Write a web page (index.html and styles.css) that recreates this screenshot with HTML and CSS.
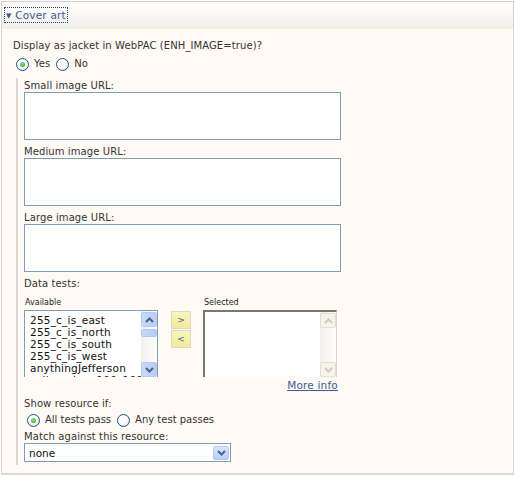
FILE: index.html
```html
<!DOCTYPE html>
<html lang="en">
<head>
  <meta charset="UTF-8">
  <title>Cover art</title>
  <link rel="stylesheet" href="styles.css">
</head>
<body>
  <div class="panel">
    <div class="panel-head">
      <a href="#" class="toggle"><span class="arrow">&#9660;</span> Cover art</a>
    </div>
    <div class="panel-body">
      <div class="label">Display as jacket in WebPAC (ENH_IMAGE=true)?</div>
      <div class="radios">
        <span class="radio checked"></span><span class="radio-text">Yes</span>
        <span class="radio"></span><span class="radio-text">No</span>
      </div>

      <div class="sub">
        <div class="label">Small image URL:</div>
        <div class="textbox"></div>
        <div class="label">Medium image URL:</div>
        <div class="textbox"></div>
        <div class="label">Large image URL:</div>
        <div class="textbox"></div>

        <div class="label">Data tests:</div>
        <div class="tests">
          <div class="col">
            <div class="mini">Available</div>
            <div class="listbox">
              <ul class="items">
                <li>255_c_is_east</li>
                <li>255_c_is_north</li>
                <li>255_c_is_south</li>
                <li>255_c_is_west</li>
                <li>anythingJefferson</li>
                <li>callnumber_100_199</li>
              </ul>
              <div class="scroll">
                <span class="sbtn"><svg width="9" height="6" viewBox="0 0 9 6"><path d="M1 5 L4.5 1.5 L8 5" fill="none" stroke="currentColor" stroke-width="2"/></svg></span>
                <span class="thumb"></span>
                <span class="track"></span>
                <span class="sbtn"><svg width="9" height="6" viewBox="0 0 9 6"><path d="M1 1 L4.5 4.5 L8 1" fill="none" stroke="currentColor" stroke-width="2"/></svg></span>
              </div>
            </div>
          </div>
          <div class="movers">
            <button class="mover">&gt;</button>
            <button class="mover">&lt;</button>
          </div>
          <div class="col">
            <div class="mini">Selected</div>
            <div class="listbox sel">
              <ul class="items"></ul>
              <div class="scroll off">
                <span class="sbtn"><svg width="9" height="6" viewBox="0 0 9 6"><path d="M1 5 L4.5 1.5 L8 5" fill="none" stroke="currentColor" stroke-width="2"/></svg></span>
                <span class="track"></span>
                <span class="sbtn"><svg width="9" height="6" viewBox="0 0 9 6"><path d="M1 1 L4.5 4.5 L8 1" fill="none" stroke="currentColor" stroke-width="2"/></svg></span>
              </div>
            </div>
          </div>
        </div>
        <div class="more"><a href="#">More info</a></div>

        <div class="label">Show resource if:</div>
        <div class="radios two">
          <span class="radio checked"></span><span class="radio-text">All tests pass</span>
          <span class="radio"></span><span class="radio-text">Any test passes</span>
        </div>
        <div class="label">Match against this resource:</div>
        <div class="dropdown">
          <span class="value">none</span>
          <span class="drop-btn"><svg width="9" height="6" viewBox="0 0 9 6"><path d="M1 1 L4.5 4.5 L8 1" fill="none" stroke="currentColor" stroke-width="2"/></svg></span>
        </div>
      </div>
    </div>
  </div>
</body>
</html>
```

FILE: styles.css
```css
body {
  margin: 0;
  padding: 0;
  background: #ffffff;
  font-family: "DejaVu Sans", Verdana, sans-serif;
  font-size: 10px;
  color: #333;
}

.panel {
  margin: 1px 1px 0 1px;
  height: 474px;
  border: 1px solid #d6d3cd;
  border-bottom: 2px solid #dcd9d4;
  background: #fffaf4;
  box-sizing: border-box;
}

.panel-head {
  height: 27px;
  padding: 6px 0 0 3px;
  box-sizing: border-box;
  background: linear-gradient(#ffffff, #fbf9f7 40%, #f1efec);
  border-bottom: 1px solid #f3efea;
}

.toggle {
  display: inline-block;
  padding: 1px 1px 0 1px;
  outline: 1px dotted #2a3f6a;
  color: #3d5b8f;
  text-decoration: none;
  font-size: 10.5px;
  line-height: 12px;
  letter-spacing: 0.2px;
}

.arrow {
  font-size: 7px;
  vertical-align: 1px;
}

.panel-body {
  padding: 11px 0 0 11px;
}

.label {
  line-height: 12px;
  height: 12px;
  color: #333;
  letter-spacing: 0.1px;
}

.radios {
  display: flex;
  align-items: center;
  height: 14px;
  margin: 5px 0 0 3px;
}

.radio {
  width: 11px;
  height: 11px;
  border: 1px solid #1d5387;
  border-radius: 50%;
  background: radial-gradient(circle at 40% 35%, #ffffff 40%, #d8d6cd);
  position: relative;
  flex: none;
}

.radio.checked::after {
  content: "";
  position: absolute;
  left: 3px;
  top: 3px;
  width: 5px;
  height: 5px;
  border-radius: 50%;
  background: radial-gradient(circle at 40% 35%, #8ee08a, #23a21f);
}

.radio-text {
  margin: 0 6px 0 5px;
  line-height: 12px;
}

.sub {
  margin: 7px 0 0 3px;
  padding: 2px 0 3px 6px;
  border-left: 2px solid #dcd9d4;
  width: 317px;
}

.textbox {
  width: 317px;
  height: 48px;
  box-sizing: border-box;
  border: 1px solid #7f9db9;
  background: #ffffff;
  margin-bottom: 6px;
}

.tests {
  display: flex;
  margin-top: 7px;
}

.col {
  display: flex;
  flex-direction: column;
}

.mini {
  font-size: 8px;
  line-height: 11px;
  height: 11px;
  margin: 0 0 2px 1px;
  color: #222;
}

.listbox {
  display: flex;
  width: 134px;
  height: 67px;
  box-sizing: border-box;
  border: 1px solid #7f9db9;
  border-bottom: none;
  background: #ffffff;
  overflow: hidden;
}

.listbox.sel {
  border-color: #7a7868;
  border-width: 2px 0 0 2px;
  border-right: 1px solid #d9d6c9;
}

.items {
  flex: 1;
  list-style: none;
  margin: 0;
  padding: 3px 0 0 5px;
  font-size: 10.5px;
  line-height: 12px;
  color: #111;
  white-space: nowrap;
  overflow: hidden;
  letter-spacing: 0.2px;
}

.scroll {
  width: 16px;
  display: flex;
  flex-direction: column;
  background: linear-gradient(90deg, #f3f1ec, #fdfdfb);
  padding-top: 1px;
}

.sbtn {
  display: flex;
  align-items: center;
  justify-content: center;
  height: 15px;
  box-sizing: border-box;
  border: 1px solid #b7c9f0;
  border-radius: 2px;
  background: linear-gradient(90deg, #c9d9fb, #b8cdf8);
  color: #4d6185;
}

.thumb {
  height: 8px;
  margin-top: 2px;
  box-sizing: border-box;
  border: 1px solid #b1c6f3;
  border-radius: 2px;
  background: linear-gradient(90deg, #c7d8fb, #b5cbf7);
}

.track {
  flex: 1;
}

.scroll.off .sbtn {
  border-color: #e2ded0;
  background: #f5f3ea;
  color: #cdcbc1;
}

.movers {
  display: flex;
  flex-direction: column;
  gap: 1px;
  margin: 14px 12px 0 13px;
}

.mover {
  width: 20px;
  height: 18px;
  padding: 0;
  border: 1px solid #dad7cf;
  background: linear-gradient(#f9f5b9, #f2eb9a);
  color: #3d5b8f;
  font-family: "DejaVu Sans", sans-serif;
  font-size: 9px;
  line-height: 16px;
}

.more {
  text-align: right;
  line-height: 12px;
  margin: 2px 3px 7px 0;
  font-size: 10.5px;
  letter-spacing: 0.2px;
}

.more a {
  color: #3a5d96;
}

.radios.two {
  margin: 3px 0 4px 3px;
}

.dropdown {
  display: flex;
  align-items: center;
  justify-content: space-between;
  width: 207px;
  height: 19px;
  box-sizing: border-box;
  border: 1px solid #7f9db9;
  background: #ffffff;
}

.value {
  padding-left: 4px;
  font-size: 10.5px;
  color: #111;
}

.drop-btn {
  display: flex;
  align-items: center;
  justify-content: center;
  width: 16px;
  height: 14px;
  margin-right: 1px;
  box-sizing: border-box;
  border: 1px solid #b7c9f0;
  border-radius: 2px;
  background: linear-gradient(#dbe6fd, #b8cdf8);
  color: #4d6185;
}
```
